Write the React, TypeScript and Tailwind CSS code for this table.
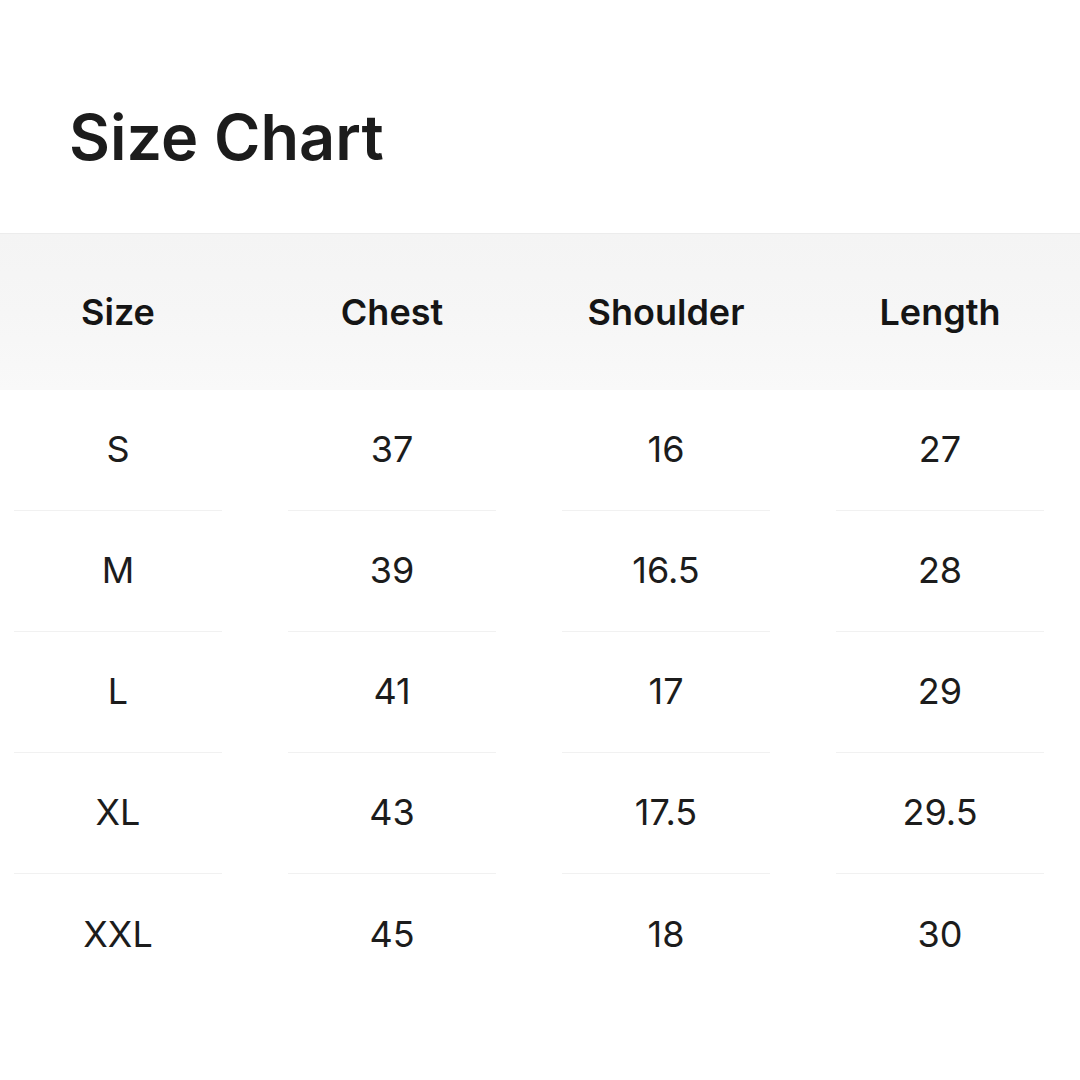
const headers = ['Size', 'Chest', 'Shoulder', 'Length']

const rows = [
  ['S', '37', '16', '27'],
  ['M', '39', '16.5', '28'],
  ['L', '41', '17', '29'],
  ['XL', '43', '17.5', '29.5'],
  ['XXL', '45', '18', '30'],
]

export default function App() {
  return (
    <div className="w-[1080px] h-[1080px] bg-white text-[#1c1c1c] font-['Inter','Liberation_Sans',sans-serif] overflow-hidden">
      <div className="h-[233px] pl-[69px] pt-[106px]">
        <h1 className="text-[63px] leading-[63px] font-semibold">Size Chart</h1>
      </div>

      <div className="h-[157px] bg-gradient-to-b from-[#f4f4f4] via-[#f6f6f6] to-[#f9f9f9] border-t border-[#ececec]">
        <div className="grid grid-cols-[repeat(4,236px)] gap-x-[38px] h-full items-center">
          {headers.map((h) => (
            <div key={h} className="text-center text-[36px] font-semibold text-[#151515]">
              {h}
            </div>
          ))}
        </div>
      </div>

      <div className="flex flex-col">
        {rows.map((row, i) => (
          <div key={row[0]} className="grid grid-cols-[repeat(4,236px)] gap-x-[38px] h-[121px]">
            {row.map((cell, j) => (
              <div key={j} className="flex flex-col">
                <div className="flex-1 flex items-center justify-center text-[36px] font-normal pb-[2px]">{cell}</div>
                {i < rows.length - 1 && <div className="mx-[14px] h-px bg-[#f1f1f1]" />}
              </div>
            ))}
          </div>
        ))}
      </div>
    </div>
  )
}
